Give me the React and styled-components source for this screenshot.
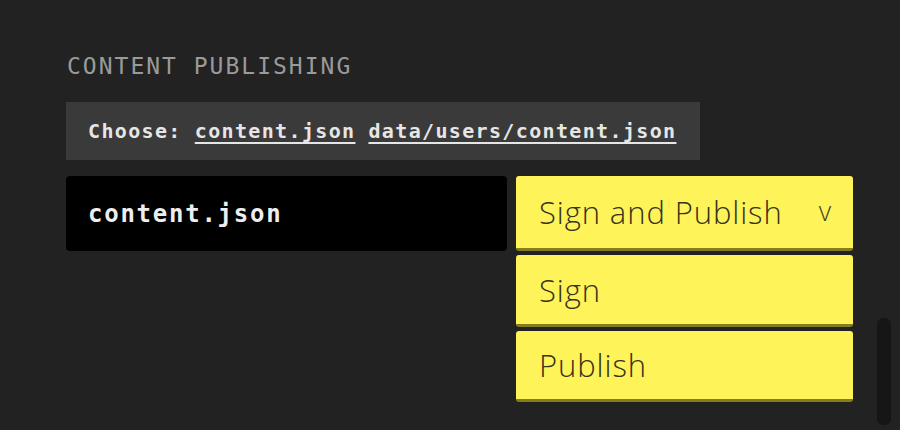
import React from "react";
import styled, { createGlobalStyle } from "styled-components";

const Global = createGlobalStyle`
  html, body { margin: 0; padding: 0; background: #222222; }
  body { width: 900px; height: 430px; overflow: hidden; }
`;

const Page = styled.div`
  position: relative;
  width: 900px;
  height: 430px;
  box-sizing: border-box;
  padding: 51px 0 0 66px;
  background: #222222;
`;

const Title = styled.h2`
  margin: 0 0 0 1px;
  font-family: "DejaVu Sans Mono", "Liberation Mono", monospace;
  font-weight: normal;
  font-size: 23px;
  letter-spacing: 2px;
  line-height: 30px;
  color: #9a9a9a;
`;

const Chooser = styled.div`
  margin-top: 21px;
  width: 634px;
  height: 58px;
  box-sizing: border-box;
  padding: 0 0 0 22px;
  display: flex;
  align-items: center;
  gap: 13px;
  background: #3a3a3a;
  font-family: "DejaVu Sans Mono", "Liberation Mono", monospace;
  font-weight: bold;
  font-size: 20px;
  letter-spacing: 1.35px;
  color: #e6e6e6;
`;

const Link = styled.a`
  color: #e6e6e6;
  text-decoration: underline;
  text-underline-offset: 4px;
  text-decoration-thickness: 2px;
  cursor: pointer;
`;

const Row = styled.div`
  margin-top: 16px;
  display: flex;
  align-items: flex-start;
  gap: 9px;
`;

const Input = styled.div`
  width: 441px;
  height: 75px;
  box-sizing: border-box;
  padding: 0 22px;
  display: flex;
  align-items: center;
  background: #000;
  border-radius: 4px;
  font-family: "DejaVu Sans Mono", "Liberation Mono", monospace;
  font-weight: bold;
  font-size: 24px;
  letter-spacing: 1.75px;
  color: #eeeeee;
`;

const Menu = styled.div`
  display: flex;
  flex-direction: column;
  gap: 4px;
  width: 337px;
`;

const Option = styled.div`
  height: ${(p) => p.$h}px;
  box-sizing: border-box;
  padding: 0 21px 0 23px;
  display: flex;
  align-items: center;
  justify-content: space-between;
  background: #fff35a;
  border-radius: 3px;
  border-bottom: 3px solid #857d1c;
  font-family: "Open Sans", "Noto Sans", sans-serif;
  font-weight: 300;
  font-size: 31px;
  letter-spacing: 0.9px;
  color: #36341a;
`;

const Caret = styled.span`
  font-size: 27px;
  color: #4a4720;
  margin-top: -4px;
`;

const Scrollbar = styled.div`
  position: absolute;
  left: 877px;
  top: 318px;
  width: 14px;
  height: 107px;
  border-radius: 6px;
  background: #161616;
`;

export default function App() {
  return (
    <>
      <Global />
      <Page>
        <Title>CONTENT PUBLISHING</Title>
        <Chooser>
          <span>Choose:</span>
          <Link>content.json</Link>
          <Link>data/users/content.json</Link>
        </Chooser>
        <Row>
          <Input>content.json</Input>
          <Menu>
            <Option $h={75}>
              <span>Sign and Publish</span>
              <Caret>v</Caret>
            </Option>
            <Option $h={72}>Sign</Option>
            <Option $h={71}>Publish</Option>
          </Menu>
        </Row>
        <Scrollbar />
      </Page>
    </>
  );
}
